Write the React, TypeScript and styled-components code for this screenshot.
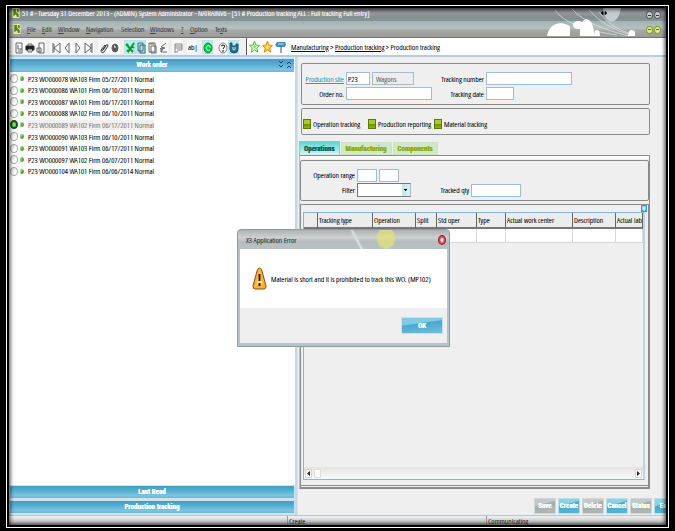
import React from 'react';
import styled, { createGlobalStyle, css } from 'styled-components';

const GlobalStyle = createGlobalStyle`
  * { box-sizing: border-box; }
  body {
    margin: 0;
    background: #000;
    color: #111;
    font-family: "Open Sans Condensed Light", "Open Sans Condensed", "Roboto Condensed", "Liberation Sans", sans-serif;
    font-size: 8px;
    font-weight: 300;
    line-height: 10px;
    text-shadow: 0 0 0 currentColor;
  }
  button, input, select { font: inherit; color: inherit; margin: 0; text-shadow: inherit; }
  a { color: inherit; }
`;

/* ---------- window frame ---------- */

const Frame = styled.div`
  height: 100vh;
  padding: 5px 6px 3px;
  background: #000;
`;

const Window = styled.div`
  position: relative;
  display: flex;
  flex-direction: column;
  height: 100%;
  overflow: hidden;
  background: #efefef;
  border: 3px solid #000;
  outline: 1px solid #fff;
  outline-offset: -1px;
`;

const Shade = styled.div`
  position: absolute;
  inset: 0;
  pointer-events: none;
  box-shadow: inset 0 0 4px 1px rgba(0, 0, 0, 0.8);
`;

const Caption = styled.header`
  position: relative;
  flex: none;
  border-bottom: 1px solid #74746c;
`;

const TitleBar = styled.div`
  height: 13px;
  padding: 0 3px 3px;
  display: flex;
  align-items: center;
  gap: 2px;
  background: linear-gradient(#6d6c70, #96989b 40%, #858e90 70%, #829699);
  color: #fff;
  white-space: nowrap;
`;

const MenuBar = styled.nav`
  height: 16px;
  padding: 0 4px;
  display: grid;
  grid-template-columns: 14px 15px 16px 28px 35px 29px 31px 9px 25px 20px;
  align-items: center;
  background: linear-gradient(#a1b2b2, #b7c1bf 45%, #a5a6a6 60%, #9b9b9b);
`;

const MenuItem = styled.button`
  padding: 0;
  border: 0;
  background: none;
  color: #3d4444;
  text-align: left;
  white-space: nowrap;
`;

const Swirl = styled.svg`
  position: absolute;
  right: 19px;
  bottom: 0;
  width: 100px;
  height: 29px;
`;

const Balls = styled.div`
  position: absolute;
  right: 4px;
  top: 0;
  height: 100%;
  display: grid;
  grid-template-columns: 8px 8px;
  align-items: center;
`;

const Ball = styled.button<{ $green?: boolean }>`
  width: 7px;
  height: 8px;
  padding: 0;
  border: 1px solid ${p => (p.$green ? '#7c9d20' : '#55565a')};
  border-radius: 50%;
  background: ${p => (p.$green ? '#dcea9c' : '#c9cbce')};
  color: ${p => (p.$green ? '#577a00' : '#333')};
  display: grid;
  place-items: center;
  &::before { content: ''; width: 3px; height: 1px; background: currentColor; }
`;

/* ---------- toolbar ---------- */

const Toolbar = styled.div`
  flex: none;
  height: 19px;
  display: flex;
  align-items: center;
  background: #fff;
  border-bottom: 2px solid #b5cddd;
`;

const Tools = styled.div`
  display: flex;
  align-self: stretch;
  align-items: center;
  gap: 4px;
  background: #efefef;
  padding: 0 7px 0 4px;
  border-right: 1px solid #555;
`;

const ToolGroup = styled.div`
  display: flex;
`;

const Tool = styled.button<{ $on?: boolean }>`
  width: 11px;
  height: 14px;
  padding: 1px 0;
  border: 1px solid ${p => (p.$on ? '#b8e4e8' : '#f8f8f8')};
  background: ${p => (p.$on ? '#b9edf0' : '#f8f8f8')};
  display: grid;
  place-items: center;
  svg { width: 10px; height: 12px; }
`;

const Crumbs = styled.nav`
  display: flex;
  align-items: center;
  gap: 2px;
  padding-left: 2px;
  white-space: nowrap;
  svg { width: 11px; height: 13px; }
`;

const CrumbText = styled.span`
  margin-left: 3px;
`;

/* ---------- work area ---------- */

const Work = styled.div`
  flex: 1;
  min-height: 0;
  display: flex;
`;

const Left = styled.aside`
  flex: 0 0 288px;
  display: flex;
  flex-direction: column;
  border-right: 2px solid #c3d9e8;
  background: #fff;
`;

const barFill = css`
  background: linear-gradient(#3e9dc6, #54acd1 35%, #7ec3df 80%, #69b7d8);
  color: #fff;
  font-weight: 700;
  font-family: "Roboto Condensed", "Liberation Sans", sans-serif;
`;

const PanelTitle = styled.h2`
  ${barFill}
  position: relative;
  flex: none;
  margin: 0 1px;
  height: 15px;
  border-top: 2px solid #cfe9f5;
  font-size: 7px;
  line-height: 13px;
  text-align: center;
  svg { position: absolute; right: 2px; top: 1px; width: 14px; height: 9px; }
`;

const OrderList = styled.ul`
  list-style: none;
  margin: 1px 0 0;
  padding: 0 0 0 1px;
  flex: none;
  height: 104px;
  display: grid;
  grid-auto-rows: 1fr;
`;

const Order = styled.label<{ $on?: boolean }>`
  display: flex;
  align-items: center;
  height: 100%;
  white-space: nowrap;
  color: ${p => (p.$on ? '#857c72' : '#111')};
  input {
    appearance: none;
    width: 8px;
    height: 9px;
    border: ${p => (p.$on ? '2px solid #174f12' : '1px solid #a9a9a9')};
    border-radius: 50%;
    background: ${p => (p.$on ? '#7be04a' : 'linear-gradient(135deg, #d4d4d4, #fff 60%)')};
  }
`;

const Dot = styled.i`
  width: 4px;
  height: 5px;
  margin: 0 4px 0 2px;
  border-radius: 50%;
  background: #4fae37;
  box-shadow: inset 1px 1px 0 #9adb86;
`;

const OrderText = styled.span<{ $on?: boolean }>`
  background: ${p => (p.$on ? '#f0f0f0' : 'none')};
`;

const Accordion = styled.div`
  margin-top: auto;
  background: #cfe4ee;
  padding: 1px 1px 2px;
  display: grid;
  gap: 3px;
`;

const AccordionBar = styled.button`
  ${barFill}
  height: 12px;
  padding: 0;
  border: 0;
  font-size: 7px;
  line-height: 12px;
`;

const Right = styled.main`
  flex: 1;
  min-width: 0;
  display: flex;
  flex-direction: column;
  padding: 6px 0 0 3px;
  border-left: 1px solid #d4e2ec;
`;

const Box = styled.section`
  flex: none;
  margin-right: 16px;
  border: 1px solid #8b8b8b;
  border-radius: 2px;
`;

const SiteBox = styled(Box)`
  height: 42px;
  display: grid;
  grid-template-columns: 42px 86px 50px 86px;
  grid-template-rows: 13px 13px;
  gap: 2px;
  padding-top: 8px;
`;

const LegendBox = styled(Box)`
  height: 27px;
  margin-top: 3px;
  padding: 4px 1px 0;
  display: grid;
  grid-template-columns: 65px 66px 65px;
  align-items: center;
`;

const Legend = styled.span`
  display: flex;
  align-items: center;
  gap: 2px;
  white-space: nowrap;
  &::before {
    content: '';
    width: 6px;
    height: 8px;
    border: 1px solid #5d7b00;
    background: linear-gradient(#a9cb2f 45%, #6c8e00 50%, #8fb515);
  }
`;

const Label = styled.label`
  display: flex;
  align-items: center;
  justify-content: flex-end;
  white-space: nowrap;
  a { color: #2f9bc6; }
`;

const Pair = styled.div`
  display: flex;
  gap: 2px;
`;

const Field = styled.input<{ $w: number }>`
  width: ${p => p.$w}px;
  height: 13px;
  padding: 0 1px;
  border: 1px solid #9fbcd6;
  background: #fff;
  border-radius: 0;
  &:read-only { background: #ededed; color: #666; padding-left: 3px; }
`;

const TabList = styled.div`
  flex: none;
  display: flex;
  align-items: flex-end;
  gap: 1px;
  margin: 6px 0 0 -2px;
`;

const Tab = styled.button<{ $on?: boolean }>`
  height: ${p => (p.$on ? 14 : 13)}px;
  padding: 0 4px;
  border: 1px solid ${p => (p.$on ? '#8fc9c4' : '#cfe3c4')};
  border-bottom: 0;
  background: ${p => (p.$on ? 'linear-gradient(#5fd5d1, #d8f5f0)' : '#cfe9c4')};
  color: ${p => (p.$on ? '#05605c' : '#90a813')};
  font-family: "Roboto Condensed", "Liberation Sans", sans-serif;
  font-size: 7px;
  font-weight: 700;
`;

const TabPage = styled.div`
  flex: 1;
  min-height: 0;
  display: flex;
  flex-direction: column;
  margin: 0 16px 0 -2px;
  padding-top: 4px;
  border: 1px solid #8b8b8b;
  border-left-color: #c0c0c0;
  background: linear-gradient(#fff 2px, #efefef 3px);
`;

const RangeBox = styled(Box)`
  height: 41px;
  margin-right: 0;
  display: grid;
  grid-template-columns: 54px 82px 28px 50px;
  grid-template-rows: 14px 14px;
  align-items: center;
  gap: 1px 2px;
  padding-top: 7px;
`;

const Filter = styled.select`
  appearance: none;
  width: 54px;
  height: 14px;
  padding: 0;
  border: 1px solid #777;
  border-right-color: #9fbcd6;
  border-radius: 0;
  background: linear-gradient(#000, #000) right 3px top 5px / 3px 1px no-repeat,
    linear-gradient(#000, #000) right 4px top 6px / 1px 1px no-repeat,
    linear-gradient(90deg, #bfe9e4, #d7f3f0) right / 8px 100% no-repeat, #fff;
`;

const GridBox = styled.section`
  position: relative;
  flex: 1;
  min-height: 0;
  display: flex;
  flex-direction: column;
  margin-top: 3px;
  padding: 7px 3px 5px 2px;
  border: 1px solid #8b8b8b;
  border-bottom: 3px double #8b8b8b;
`;

const GridIcon = styled.svg`
  position: absolute;
  right: 1px;
  top: 0;
  width: 6px;
  height: 7px;
`;

const GridView = styled.div`
  flex: 1;
  min-height: 0;
  display: flex;
  flex-direction: column;
  overflow: hidden;
  border: 1px solid #8fb2d0;
  border-right: 2px solid #bfd2e6;
`;

const Table = styled.table`
  width: 100%;
  table-layout: fixed;
  border-collapse: separate;
  border-spacing: 0;
  th {
    height: 16px;
    padding: 0 1px;
    border-right: 1px solid #666;
    border-bottom: 2px solid #777;
    background: #ececec;
    font-weight: inherit;
    text-align: left;
    white-space: nowrap;
    overflow: hidden;
  }
  td {
    height: 14px;
    padding: 0;
    background: #fff;
    border-right: 1px solid #d8d8d8;
    border-bottom: 1px solid #d8d8d8;
  }
`;

const Col = styled.col<{ $w?: number }>`
  ${p => p.$w && `width: ${p.$w}px;`}
`;

const ScrollBar = styled.div`
  margin-top: auto;
  height: 12px;
  display: flex;
  align-items: center;
  gap: 2px;
  padding: 0 1px;
  background: linear-gradient(#e3e3e3, #fbfbfb);
`;

const ScrollButton = styled.button`
  width: 7px;
  height: 9px;
  padding: 0;
  border: 1px solid #d4d4d4;
  background: #fafafa;
  display: grid;
  place-items: center;
  svg { width: 3px; height: 5px; }
  &:last-child { margin-left: auto; }
`;

const Thumb = styled.i`
  width: 7px;
  height: 9px;
  border: 1px solid #ddd;
  background: #fff;
`;

const Actions = styled.footer`
  flex: none;
  display: flex;
  justify-content: flex-end;
  gap: 2px;
  height: 26px;
  padding-top: 9px;
  margin-right: -10px;
`;

const Action = styled.button<{ $on?: boolean }>`
  flex: none;
  width: 22px;
  height: 16px;
  padding: 0;
  border: 1px solid ${p => (p.$on ? '#b9e0f0' : '#d3d6d7')};
  background: ${p =>
    p.$on
      ? 'linear-gradient(165deg, #8ed0e8 35%, #4aa9cf 40%, #5cb5d8)'
      : 'linear-gradient(165deg, #c4c8c9 35%, #a9adae 40%, #b4b7b8)'};
  color: #fff;
  font-family: "Roboto Condensed", "Liberation Sans", sans-serif;
  font-size: 7px;
  font-weight: 700;
  line-height: 14px;
`;

const StatusBar = styled.div`
  flex: none;
  height: 10px;
  display: grid;
  grid-template-columns: 278px 199px 1fr;
  align-items: end;
  border-top: 1px solid #b5c6d0;
  background: linear-gradient(#f2f2f2, #b5b5b5);
  color: #333;
`;

const StatusCell = styled.span`
  height: 9px;
  padding-left: 1px;
  border-left: 1px solid #999;
  &:first-child { border: 0; }
`;

/* ---------- dialog ---------- */

const Dialog = styled.div`
  position: absolute;
  left: 228px;
  top: 221px;
  width: 213px;
  height: 118px;
  display: flex;
  flex-direction: column;
  padding: 0 2px 3px;
  border: 1px solid #8e9c9e;
  border-radius: 4px 4px 0 0;
  background: #b4c3c6;
`;

const DialogTitle = styled.h1`
  flex: none;
  display: flex;
  align-items: center;
  justify-content: space-between;
  height: 19px;
  margin: 0 -2px;
  padding: 0 3px 0 8px;
  border-radius: 3px 3px 0 0;
  background: radial-gradient(ellipse 10px 12px at 148px 8px, rgba(228, 228, 120, 0.7) 80%, transparent),
    linear-gradient(62deg, transparent 55%, #dfe2e2 56%, transparent 57%),
    linear-gradient(#aeb1b3, #cfd1d1 40%, #b8bcbd 60%, #b6c2c3);
  color: #2f3436;
  font-size: 8px;
  font-weight: 300;
`;

const Close = styled.button`
  width: 8px;
  height: 10px;
  padding: 0;
  border: 1px solid #a32228;
  border-radius: 50%;
  background: radial-gradient(#fff 15%, #d5555b 50%, #bf2b32);
`;

const DialogBody = styled.div`
  flex: 1;
  display: flex;
  align-items: center;
  gap: 4px;
  padding-left: 12px;
  background: #fff;
  white-space: nowrap;
  svg { width: 15px; height: 23px; }
`;

const DialogFoot = styled.div`
  flex: none;
  height: 35px;
  padding: 9px 4px 0 0;
  display: flex;
  justify-content: flex-end;
  align-items: flex-start;
  background: #efefef;
`;

const Ok = styled.button`
  width: 42px;
  height: 17px;
  padding: 0;
  border: 1px solid #c3e2ee;
  background: linear-gradient(172deg, #7fcae4 35%, #4aa7cd 40%, #6fc0de);
  color: #fff;
  font-family: "Roboto Condensed", "Liberation Sans", sans-serif;
  font-size: 7px;
  font-weight: 700;
`;

/* ---------- drawings ---------- */

const Leaf = () => (
  <svg width="8" height="10" viewBox="0 0 8 11">
    <rect width="8" height="11" rx="1" fill="#dfe9a8" />
    <path d="M1 1h3v3l3 3v3H5L4 7 1 9zM5 1h2v4L5 4z" fill="#5c7f12" />
  </svg>
);

const glyphs: Record<string, React.ReactNode> = {
  newDoc: <path d="M2 1h6v10H2zM4 3v4h4M4 9h3" />,
  print: <><path d="M3 2h4v3H3zM3 7h4v3H3z" /><path d="M1 4h8v4H1z" fill="#222" stroke="#222" /><path d="M3 8h4" stroke="#fff" /></>,
  preview: <path d="M3 1h5v10H3zM1 6h4v4H1z" />,
  first: <path d="M2 1v10M9 1v10L3 6zM3 2v8" />,
  prev: <path d="M7 1v10L3 6z" />,
  next: <path d="M3 1v10l4-5z" />,
  last: <path d="M8 1v10M1 1v10l6-5zM7 2v8" />,
  clip: <path d="M3 9l4-6q2-1 2 1L5 10Q2 12 2 8l4-5M4 8l3-4" stroke="#333" />,
  mouse: <><ellipse cx="5" cy="6" rx="3" ry="4" fill="#555" /><path d="M4 4h1v2" stroke="#fff" /></>,
  cut: <path d="M1 2l7 8M9 1L3 10M2 2l2 4M6 4l3 2M2 8l2 2" stroke="#0c9a2c" strokeWidth="2" />,
  copy: <path d="M2 1h5v8H2zM4 3h5v8H4z" stroke="#37666d" />,
  paste: <path d="M2 1h6v9H2zM4 4h5v7H4zM3 2h4" />,
  undo: <path d="M8 1L3 5l4 1-4 1v3h6M3 10l2-3M2 6l2 2" />,
  list: <path d="M2 2h7M2 4h7M2 6h7M4 8h5M2 10h3M2 2v9M9 2v6" stroke="#888" />,
  go: <><ellipse cx="5" cy="6" rx="4" ry="5" fill="#14bf45" stroke="#069134" /><path d="M7 4Q4 2 3 6q1 4 4 2M7 4v2" stroke="#bff5c9" /></>,
  help: <><ellipse cx="5" cy="6" rx="4" ry="5" fill="#fff" stroke="#777" /><path d="M3 4q2-2 4 0L5 7M5 8v2" stroke="#111" /></>,
  globe: <><path d="M1 1h2v3h4V2h2v5q0 4-4 4T1 7z" fill="#236c91" stroke="#1c5876" /><path d="M4 5q-1 3 1 3t1-3" stroke="#c7eef8" /></>,
};

const Glyph = ({ name }: { name: string }) => (
  <svg viewBox="0 0 10 12" fill="none" stroke="#666">{glyphs[name]}</svg>
);

const Star = ({ fill, line, inner }: { fill: string; line: string; inner: string }) => (
  <svg viewBox="0 0 11 13">
    <path d="M5.500 1l1.400 4 3.600.4-2.700 2.600.9 4.200-3.200-2.200-3.200 2.200.9-4.200L.5 5.400 4.100 5z" fill={fill} stroke={line} />
    <path d="M5.500 4l.6 2 1.500.4-1.200 1 .4 1.600-1.300-.8-1.300.8.4-1.600-1.200-1L4.900 6z" fill={inner} />
  </svg>
);

/* ---------- content ---------- */

const menus = [['F', 'ile'], ['E', 'dit'], ['W', 'indow'], ['N', 'avigation'], ['', 'Selection'], ['W', 'indows'], ['?', ''], ['O', 'ption']];

const toolGroups = [
  ['newDoc', 'print', 'preview'],
  ['first', 'prev', 'next', 'last'],
  ['clip', 'mouse'],
  ['cut', 'copy', 'paste', 'undo'],
  ['list'],
  ['ab'],
  ['go'],
  ['help', 'globe'],
];
const lit = ['cut', 'copy', 'go', 'globe'];

const orders = [
  'P23 WO000078 WA103 Firm 05/27/2011 Normal',
  'P23 WO000086 WA101 Firm 06/10/2011 Normal',
  'P23 WO000087 WA101 Firm 06/17/2011 Normal',
  'P23 WO000088 WA102 Firm 06/10/2011 Normal',
  'P23 WO000089 WA102 Firm 06/17/2011 Normal',
  'P23 WO000090 WA103 Firm 06/10/2011 Normal',
  'P23 WO000091 WA103 Firm 06/17/2011 Normal',
  'P23 WO000097 WA102 Firm 06/07/2011 Normal',
  'P23 WO000104 WA101 Firm 06/06/2014 Normal',
];
const selected = 4;

const columns: [string, number?][] = [
  ['', 14], ['Tracking type', 55], ['Operation', 43], ['Split', 21], ['Std oper', 40],
  ['Type', 29], ['Actual work center', 67], ['Description', 43], ['Actual lab'],
];

const actions: [string, boolean][] = [
  ['Save', false], ['Create', true], ['Delete', false], ['Cancel', true], ['Status', false], ['End', true],
];

export default function App() {
  return (
    <Frame>
      <GlobalStyle />
      <Window>
        <Caption>
          <TitleBar>
            <Leaf />
            51 # - Tuesday 31 December 2013 - (ADMIN) System Administrator - NATRAINV6 - [51 # Production tracking ALL : Full tracking Full entry]
          </TitleBar>
          <MenuBar>
            <Leaf />
            {menus.map(([key, rest], i) => (
              <MenuItem key={i}>{key && <u>{key}</u>}{rest}</MenuItem>
            ))}
            <MenuItem>Te<u>x</u>ts</MenuItem>
          </MenuBar>
          <Swirl viewBox="0 0 100 29">
            <path d="M8 2Q20 20 70 27M25 1Q40 18 82 28M42 2q16 18 42 25M52 4q12 16 32 22" fill="none" stroke="#dfe6e6" strokeWidth="0.700" />
            <path d="M56 0h18q-2 13-10 14-7-2-8-14z" fill="#c4cccd" />
            <path d="M0 28Q2 16 14 15q10 2 9 5v8z" fill="#fff" />
            <ellipse cx="31" cy="17" rx="5" ry="4" fill="#fff" />
            <path d="M33 28q-1-15 6-17 8 1 8 17zM47 28q0-6 3-6t3 6zM81 28q0-6 4-6t3 6z" fill="#fff" />
            <path d="M54 5l2-2v4zM60 5l-2-2v4zM55 5h4" fill="#000" stroke="#000" strokeWidth="0.500" />
          </Swirl>
          <Balls>
            <Ball aria-label="Minimize" /><Ball aria-label="Restore" />
            <Ball $green aria-label="Minimize page" /><Ball $green aria-label="Restore page" />
          </Balls>
        </Caption>

        <Toolbar>
          <Tools>
            {toolGroups.map((group, i) => (
              <ToolGroup key={i}>
                {group.map(name => (
                  <Tool key={name} $on={lit.includes(name)} aria-label={name}>
                    {name === 'ab' ? 'ab|' : <Glyph name={name} />}
                  </Tool>
                ))}
              </ToolGroup>
            ))}
          </Tools>
          <Crumbs>
            <Star fill="#eafbe0" line="#54b93c" inner="#8ed67a" />
            <Star fill="#ffc820" line="#ee8d12" inner="#ffe680" />
            <svg viewBox="0 0 11 13">
              <path d="M6 4v9" stroke="#7c858a" strokeWidth="1.500" />
              <path d="M0 5l2-3h8l1 2-1 3H2z" fill="#3c8cc0" />
              <path d="M3 4h6" stroke="#c5e4f4" />
            </svg>
            <CrumbText><a href="#manufacturing">Manufacturing</a> &gt; <a href="#tracking">Production tracking</a> &gt; Production tracking</CrumbText>
          </Crumbs>
        </Toolbar>

        <Work>
          <Left>
            <PanelTitle>
              Work order
              <svg viewBox="0 0 14 9" fill="none" stroke="#143c8c">
                <path d="M1 1l2 2 2-2M1 5l2 2 2-2M9 4l2-2 2 2M9 8l2-2 2 2" />
              </svg>
            </PanelTitle>
            <OrderList>
              {orders.map((text, i) => (
                <li key={text}>
                  <Order $on={i === selected}>
                    <input type="radio" name="order" defaultChecked={i === selected} />
                    <Dot />
                    <OrderText $on={i === selected}>{text}</OrderText>
                  </Order>
                </li>
              ))}
            </OrderList>
            <Accordion>
              <AccordionBar>Last Read</AccordionBar>
              <AccordionBar>Production tracking</AccordionBar>
            </Accordion>
          </Left>

          <Right>
            <SiteBox>
              <Label htmlFor="site"><a href="#site">Production site</a></Label>
              <Pair>
                <Field id="site" $w={24} defaultValue="P23" />
                <Field $w={42} readOnly value="Wagons" aria-label="Site name" />
              </Pair>
              <Label htmlFor="number">Tracking number</Label>
              <Field id="number" $w={86} />
              <Label htmlFor="order">Order no.</Label>
              <Field id="order" $w={86} />
              <Label htmlFor="date">Tracking date</Label>
              <Field id="date" $w={28} />
            </SiteBox>
            <LegendBox>
              <Legend>Operation tracking</Legend>
              <Legend>Production reporting</Legend>
              <Legend>Material tracking</Legend>
            </LegendBox>
            <TabList role="tablist">
              <Tab role="tab" $on aria-selected>Operations</Tab>
              <Tab role="tab">Manufacturing</Tab>
              <Tab role="tab">Components</Tab>
            </TabList>
            <TabPage>
              <RangeBox>
                <Label htmlFor="from">Operation range</Label>
                <Pair>
                  <Field id="from" $w={20} />
                  <Field $w={20} aria-label="Operation range end" />
                </Pair>
                <span /><span />
                <Label htmlFor="filter">Filter</Label>
                <Filter id="filter" />
                <Label htmlFor="qty">Tracked qty</Label>
                <Field id="qty" $w={50} />
              </RangeBox>
              <GridBox>
                <GridIcon viewBox="0 0 6 7">
                  <rect width="6" height="7" fill="#3d9cc6" />
                  <path d="M1 2h4M1 4h4M3 2v4" stroke="#fff" />
                </GridIcon>
                <GridView>
                  <Table>
                    <colgroup>{columns.map(([name, w]) => <Col key={name} $w={w} />)}</colgroup>
                    <thead><tr>{columns.map(([name]) => <th key={name}>{name}</th>)}</tr></thead>
                    <tbody><tr>{columns.map(([name]) => <td key={name} />)}</tr></tbody>
                  </Table>
                  <ScrollBar>
                    <ScrollButton aria-label="Scroll left"><svg viewBox="0 0 3 5"><path d="M3 0v5L0 2.500z" fill="#222" /></svg></ScrollButton>
                    <Thumb />
                    <ScrollButton aria-label="Scroll right"><svg viewBox="0 0 3 5"><path d="M0 0v5l3-2.500z" fill="#222" /></svg></ScrollButton>
                  </ScrollBar>
                </GridView>
              </GridBox>
            </TabPage>
            <Actions>
              {actions.map(([name, on]) => <Action key={name} $on={on}>{name}</Action>)}
            </Actions>
          </Right>
        </Work>

        <StatusBar>
          <StatusCell />
          <StatusCell>Create</StatusCell>
          <StatusCell>Communicating</StatusCell>
        </StatusBar>

        <Dialog role="dialog" aria-labelledby="error-title">
          <DialogTitle id="error-title">X3 Application Error<Close aria-label="Close" /></DialogTitle>
          <DialogBody>
            <svg viewBox="0 0 15 23">
              <path d="M7.500 1Q9 1 10 4l4 15q0 3-2 3H3q-2 0-2-3L5 4q1-3 2.500-3z" fill="#f9b233" stroke="#8c4a14" />
              <path d="M7.500 4l3 14h-6z" fill="#ffe183" />
              <path d="M7.500 7v7M7.500 16v3" stroke="#2a1a08" strokeWidth="2" />
            </svg>
            Material is short and it is prohibited to track this WO. (MP102)
          </DialogBody>
          <DialogFoot><Ok>OK</Ok></DialogFoot>
        </Dialog>
        <Shade />
      </Window>
    </Frame>
  );
}
